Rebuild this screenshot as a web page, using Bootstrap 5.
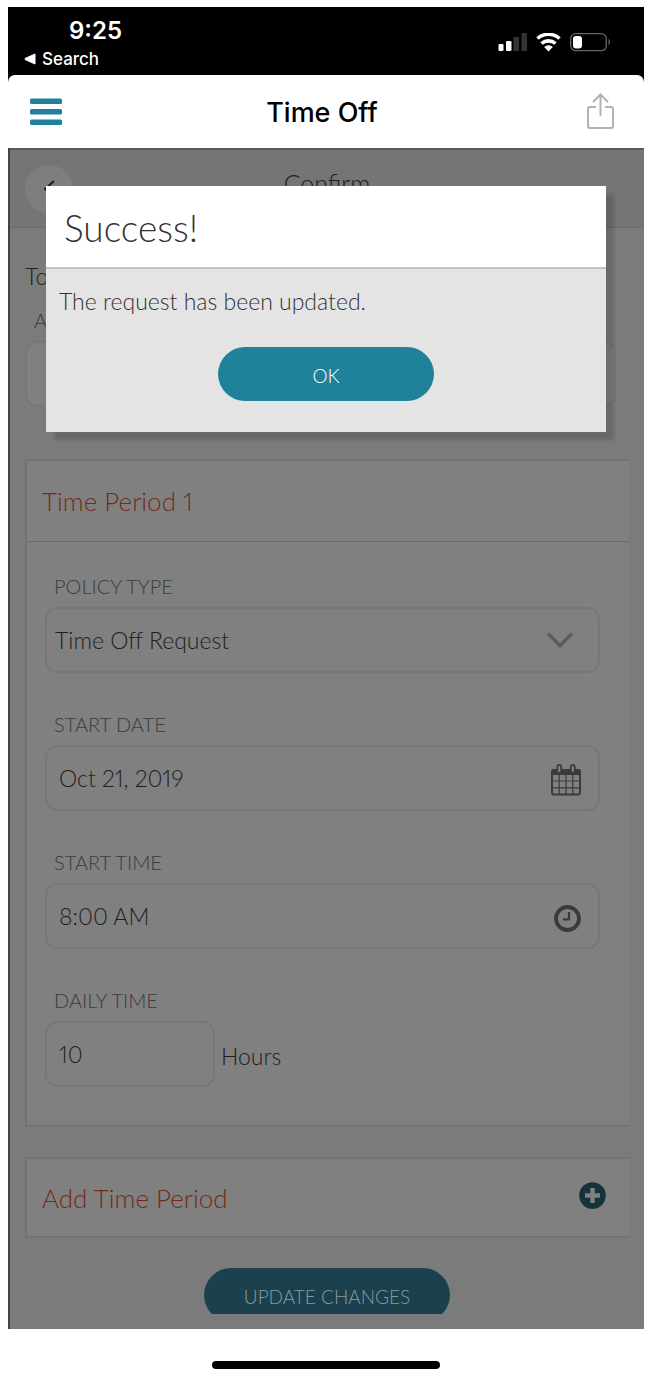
<!DOCTYPE html>
<html lang="en">
<head>
<meta charset="utf-8">
<meta name="viewport" content="width=device-width, initial-scale=1">
<title>Time Off</title>
<link href="https://cdn.jsdelivr.net/npm/bootstrap@5.3.0/dist/css/bootstrap.min.css" rel="stylesheet">
<style>
  body { font-family: Lato, "Liberation Sans", sans-serif; font-weight: 300; font-size: 23px; line-height: 28px; color: #1e1e1e; background: #fff; font-variant-numeric: proportional-nums; }
  .phone { padding: 7px 12px 0 8px; }
  .system { font-family: Inter, "Liberation Sans", sans-serif; }
  .status-bar { background: #000; color: #fff; height: 75px; padding: 10px 33px 0 16px; margin-bottom: -7px; }
  .clock { font-size: 24px; line-height: 28px; font-weight: 600; padding-left: 45px; }
  .back-link { font-size: 17px; line-height: 28px; font-weight: 500; color: #fff; gap: 6px; }
  .app-bar { background: #fff; height: 73px; padding: 0 30px 0 22px; border-radius: 7px 7px 0 0; position: relative; }
  .app-title { font-size: 27px; line-height: 32px; font-weight: 500; color: #000; padding-top: 2px; }
  .side { width: 33px; }
  .app-panel { background: #7b7b7b; border-left: 2px solid #444; overflow: hidden; padding-bottom: 15px; }
  .page-head { background: #757575; height: 80px; border-top: 2px solid #5a5a5a; border-bottom: 1px solid #6c6c6c; padding: 0 15px; }
  .circle-btn { width: 48px; height: 48px; border-radius: 50%; background: #7e7e7e; }
  .page-title { font-size: 25px; line-height: 32px; font-weight: 300; padding-bottom: 12px; }
  .page-body { padding: 34px 15px 0; }
  .caption { font-size: 20px; line-height: 28px; color: #3b3b3b; padding-left: 9px; margin-bottom: 7px; display: block; }
  .field { height: 66px; border: 2px solid #777; border-radius: 12px; background: #808080; padding-right: 17px; }
  .field .form-control, .field .form-select { background: none; border: 0; box-shadow: none; font-size: 23px; font-weight: 300; color: #1e1e1e; padding: 0 12px; font-variant-numeric: proportional-nums; }
  .field .form-select { padding-left: 8px; }
  .field-list { gap: 37px; padding: 30px 29px 38px 18px; }
  .unit { padding: 4px 0 0 6px; }
  .panel-box { background: #808080; border: 2px solid #747474; border-right: 0; }
  .period { margin-top: 52px; }
  .add-row { margin: 30px 0; }
  .panel-title { height: 81px; padding: 0 23px 0 15px; font-size: 26px; line-height: 32px; font-weight: 300; color: #742a1b; }
  .panel-line { border-bottom: 1px solid #696969; }
  .recipient { margin-right: 13px; }
  .short-field { width: 170px; }
  .pill { border: 0; border-radius: 27px; height: 54px; font-size: 19px; line-height: 24px; font-weight: 300; padding-top: 9px; }
  .pill-dim { background: #1a414d; color: #8c9a9e; width: 246px; }
  .pill-clip { height: 46px; overflow: hidden; }
  .pill-main { background: #1f819a; color: #fff; width: 216px; }
  .dialog-box { position: absolute; top: 38px; left: 38px; right: 38px; background: #e4e4e4; box-shadow: 8px 8px 4px rgba(0,0,0,.15); color: #333; padding-bottom: 31px; }
  .dialog-title { background: #fff; height: 83px; border-bottom: 2px solid #c4c4c4; font-size: 37px; line-height: 44px; font-weight: 300; padding: 2px 18px 0; }
  .dialog-text { padding: 18px 13px 32px; }
  .home-area { padding: 32px 0 6px; }
  .home-line { width: 228px; height: 8px; border-radius: 4px; background: #000; }
</style>
</head>
<body>
<div class="phone">
  <header class="system">
    <div class="status-bar d-flex justify-content-between">
      <div>
        <div class="clock">9:25</div>
        <a class="back-link d-flex align-items-center text-decoration-none" href="#">
          <svg width="12" height="12" viewBox="0 0 12 12" fill="#fff"><path d="M11 1v10L1 6.500v-1z" stroke="#fff" stroke-linejoin="round"/></svg>Search
        </a>
      </div>
      <svg class="mt-3" width="113" height="20" viewBox="498 33 113 20" fill="#fff" role="img" aria-label="Signal, Wi-Fi and battery">
        <rect x="498.500" y="44" width="5" height="7" rx="1"/><rect x="506" y="41" width="5.500" height="10" rx="1"/>
        <g fill="#333"><rect x="513.500" y="37" width="5.500" height="14" rx="1"/><rect x="521.500" y="33" width="5.500" height="18" rx="1"/></g>
        <path d="M537.500 38.500a16.500 16.500 0 0 1 22 0M541.500 43.500a10.500 10.500 0 0 1 14 0" fill="none" stroke="#fff" stroke-width="3.600"/>
        <path d="M548.500 51.500l-4.300-4.400a6 6 0 0 1 8.600 0z"/>
        <rect x="570.700" y="33.700" width="35.600" height="17" rx="5" fill="none" stroke="#666" stroke-width="1.300"/>
        <rect x="573" y="36" width="9" height="12.500" rx="3"/><path d="M608.500 38.500q3 3.500 0 7z" fill="#666"/>
      </svg>
    </div>
    <div class="app-bar d-flex align-items-center justify-content-between">
      <button class="btn p-0 border-0 d-flex side" aria-label="Menu">
        <svg width="33" height="28" viewBox="0 0 33 28" fill="#1f819a"><rect width="32" height="5.500" y="0.500" rx="1.500"/><rect y="11" width="32" height="5.500" rx="1.500"/><rect y="21.500" width="32" height="5.500" rx="1.500"/></svg>
      </button>
      <h1 class="app-title m-0">Time Off</h1>
      <button class="btn p-0 border-0 side d-flex justify-content-end" aria-label="Share">
        <svg width="27" height="37" viewBox="0 0 27 37" fill="none" stroke="#b2b2b2" stroke-width="2"><path d="M9 14H3q-2 0-2 2v17q0 2 2 2h21q2 0 2-2V16q0-2-2-2h-6M13.500 23V2M6 9l7.500-7.500L21 9"/></svg>
      </button>
    </div>
  </header>

  <div class="position-relative">
    <main class="app-panel">
      <div class="page-head d-flex align-items-center justify-content-between">
        <button class="circle-btn btn p-0 border-0 d-flex align-items-center justify-content-center" aria-label="Back">
          <svg width="12" height="18" viewBox="0 0 12 18" fill="none" stroke="#1e1e1e" stroke-width="2"><path d="M11 1L2 9l9 8"/></svg>
        </button>
        <h2 class="page-title m-0">Confirm</h2>
        <span class="circle-btn invisible"></span>
      </div>
      <div class="page-body">
        <div class="recipient">
          <div class="mb-3">To</div>
          <label class="caption" for="approver">A</label>
          <div class="field d-flex align-items-center"><input class="form-control" id="approver" type="text"></div>
        </div>

        <section class="panel-box period">
          <h3 class="panel-title panel-line d-flex align-items-center m-0">Time Period 1</h3>
          <div class="field-list d-flex flex-column">
            <div>
              <label class="caption" for="policy">POLICY TYPE</label>
              <div class="field d-flex align-items-center">
                <select class="form-select" id="policy"><option>Time Off Request</option></select>
                <svg class="flex-shrink-0 me-2" width="26" height="16" viewBox="0 0 26 16" fill="none" stroke="#5c5c5c" stroke-width="3.400"><path d="M1 1.500l12 12 12-12"/></svg>
              </div>
            </div>
            <div>
              <label class="caption" for="start-date">START DATE</label>
              <div class="field d-flex align-items-center">
                <input class="form-control" id="start-date" type="text" value="Oct 21, 2019">
                <svg class="flex-shrink-0 mt-1" width="30" height="32" viewBox="0 0 30 32" fill="none" stroke="#3b3b3b"><path d="M1 10V28.500q0 2 2 2h24q2 0 2-2V10" stroke-width="2"/><path d="M0 11V7q0-2 2-2h26q2 0 2 2v4z" fill="#3b3b3b" stroke="none"/><path d="M8.200 11v19M15 11v19M21.800 11v19M1 17h28M1 23.800h28" stroke-width="1.200"/><rect x="6.200" y="1" width="4" height="8" rx="2" fill="#808080" stroke-width="1.800"/><rect x="19.800" y="1" width="4" height="8" rx="2" fill="#808080" stroke-width="1.800"/></svg>
              </div>
            </div>
            <div>
              <label class="caption" for="start-time">START TIME</label>
              <div class="field d-flex align-items-center">
                <input class="form-control" id="start-time" type="text" value="8:00 AM">
                <svg class="flex-shrink-0 mt-1" width="27" height="27" viewBox="0 0 27 27" fill="none" stroke="#3b3b3b"><circle cx="13.500" cy="13.500" r="11.500" stroke-width="3.800"/><path d="M15 7v7.300H9" stroke-width="2.200"/></svg>
              </div>
            </div>
            <div>
              <label class="caption" for="daily">DAILY TIME</label>
              <div class="d-flex align-items-center">
                <div class="field short-field d-flex align-items-center"><input class="form-control" id="daily" type="text" value="10"></div>
                <span class="unit">Hours</span>
              </div>
            </div>
          </div>
        </section>

        <section class="panel-box panel-title add-row d-flex align-items-center justify-content-between">
          <span>Add Time Period</span>
          <button class="btn p-0 border-0 d-flex mb-1" aria-label="Add time period">
            <svg width="27" height="27" viewBox="0 0 27 27"><circle cx="13.500" cy="13.500" r="13.300" fill="#16323b"/><path d="M13.500 6v15M6 13.500h15" stroke="#808080" stroke-width="4.400"/></svg>
          </button>
        </section>

        <div class="pill-clip d-flex justify-content-center">
          <button class="btn pill pill-dim flex-shrink-0">UPDATE CHANGES</button>
        </div>
      </div>
    </main>

    <div class="dialog-box" role="dialog" aria-labelledby="dialog-title">
      <h2 class="dialog-title d-flex align-items-center m-0" id="dialog-title">Success!</h2>
      <p class="dialog-text m-0">The request has been updated.</p>
      <div class="d-flex justify-content-center"><button class="btn pill pill-main">OK</button></div>
    </div>
  </div>

  <div class="home-area d-flex justify-content-center"><div class="home-line"></div></div>
</div>
<script src="https://cdn.jsdelivr.net/npm/bootstrap@5.3.0/dist/js/bootstrap.bundle.min.js"></script>
</body>
</html>
